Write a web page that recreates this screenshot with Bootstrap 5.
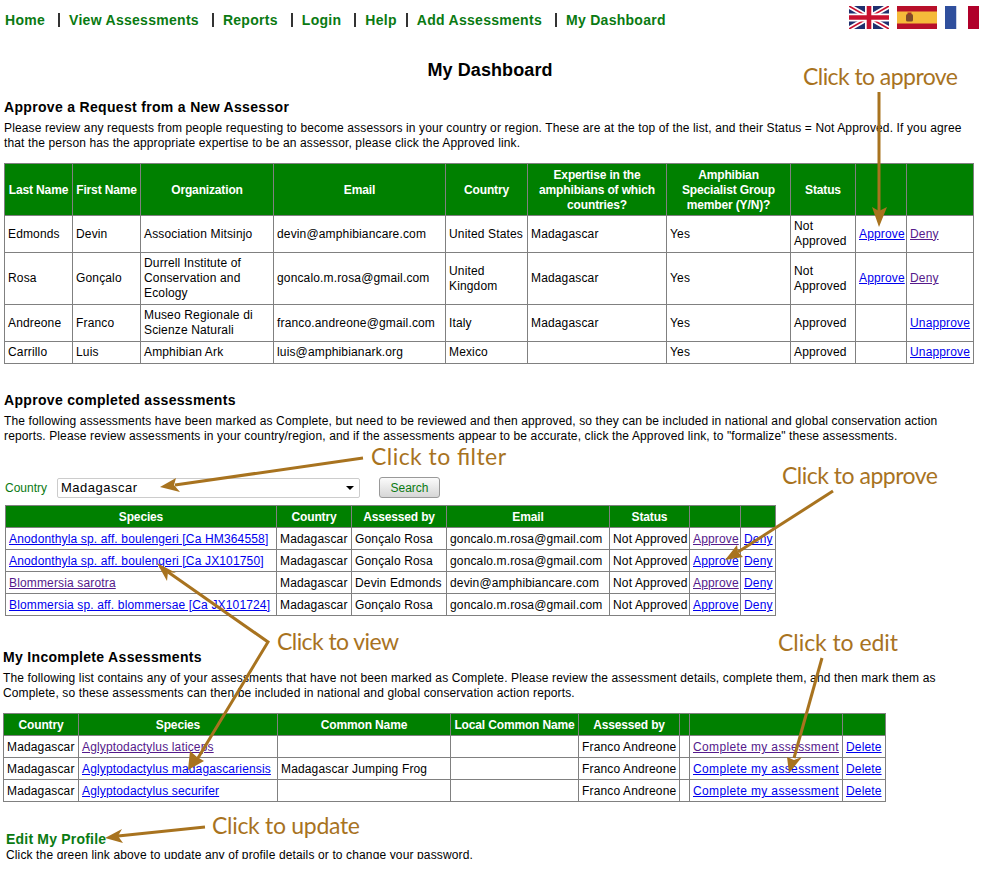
<!DOCTYPE html>
<html lang="en">
<head>
    <meta charset="UTF-8">
    <meta name="viewport" content="width=device-width, initial-scale=1.0">
    <title>My Dashboard</title>
    <link href="https://cdn.jsdelivr.net/npm/bootstrap@5.3.3/dist/css/bootstrap.min.css" rel="stylesheet">
    <script src="https://cdn.jsdelivr.net/npm/bootstrap@5.3.3/dist/js/bootstrap.bundle.min.js"></script>
    <style>
        body { font-family: "Liberation Sans", Arial, sans-serif; font-size: 12px; line-height: 15px; color: #000; background: #fff; }
        .page-clip { position: relative; height: 859px; overflow: hidden; }
        a { color: #0000ee; }
        a.seen { color: #551a8b; }

        .top-bar { height: 40px; padding: 0 4px 0 5px; }
        .top-link { font-size: 14px; font-weight: 700; line-height: 16px; color: #0a7a12; text-decoration: none; letter-spacing: .285px; }
        .top-sep { width: 2px; height: 14px; background: #333; margin: 0 9px 0 13px; }
        .top-sep.tight { margin-left: 9px; }
        .flags { position: absolute; top: 6px; left: 849px; gap: 8px; }

        .page-title { font-size: 18px; font-weight: 700; line-height: 22px; text-align: center; letter-spacing: .1px; margin: 19px 0 0; padding-right: 3px; }
        .sect-head { font-size: 14px; font-weight: 700; line-height: 16px; letter-spacing: .32px; margin: 0 0 6px 4px; }
        .sect-text { letter-spacing: .13px; margin: 0 8px 12px 4px; }
        .head-a { margin-top: 18px; }
        .head-b { margin-top: 28px; }
        .head-c { margin-top: 33px; margin-left: 3px; }
        .text-c { margin-left: 3px; }

        .grid-tbl { table-layout: fixed; border-collapse: collapse; margin-bottom: 0; }
        .grid-tbl > :not(caption) > * > * { padding: 3px; border: 1px solid #808080; font-size: 12px; line-height: 15px; letter-spacing: .15px; color: #000; background: #fff; box-shadow: none; vertical-align: middle; }
        .grid-tbl > thead > tr > th { padding: 4px 3px 2px; background: #008000; color: #fff; font-weight: 700; text-align: center; letter-spacing: -.15px; }
        .grid-b > tbody > tr > td, .grid-c > tbody > tr > td { padding: 4px 3px 2px; white-space: nowrap; }
        .grid-c > tbody > tr > td:nth-child(7) a { letter-spacing: .36px; }
        .grid-a { width: 969px; margin-left: 4px; }
        .grid-b { width: 770px; margin-left: 5px; }
        .grid-c { width: 882px; margin-left: 3px; }

        .filter-row { height: 21px; margin: 33px 0 7px 5px; }
        .filter-label { width: 52px; padding-top: 1px; color: #0a7a12; }
        .filter-select { width: 303px; height: 20px; padding: 0 0 0 3px; font-size: 13px; line-height: 18px; font-family: "Liberation Sans", Arial, sans-serif; letter-spacing: .5px; color: #000; border: 1px solid #ccc; border-radius: 2px; background-image: url("data:image/svg+xml,%3csvg xmlns='http://www.w3.org/2000/svg' viewBox='0 0 8 4'%3e%3cpath d='M0 0h8L4 4z'/%3e%3c/svg%3e"); background-position: right 5px center; background-size: 8px 4px; }
        .search-btn { width: 61px; height: 21px; margin-left: 19px; padding: 1px 0 0; font-size: 12px; line-height: 15px; color: #0a7a12; border: 1px solid #999; border-radius: 3px; background: linear-gradient(#fbfbfb, #d6d6d6); }

        .profile-link { display: block; font-size: 14px; font-weight: 700; line-height: 16px; letter-spacing: .2px; color: #0a7a12; text-decoration: none; margin: 29px 0 1px 6px; }
        .profile-text { letter-spacing: .13px; margin: 0 0 0 6px; }

        .notes { position: absolute; left: 0; top: 0; pointer-events: none; }
        .notes text { font-family: Lato, "DejaVu Sans", sans-serif; font-size: 23px; fill: #a8731f; }
        .notes line, .notes polyline { stroke: #a8731f; stroke-width: 3; fill: none; }
        .notes polygon { fill: #a8731f; }
    </style>
</head>
<body>
<div class="page-clip">
    <nav class="top-bar d-flex align-items-center">
        <a class="top-link" href="#">Home</a><span class="top-sep"></span>
        <a class="top-link" href="#">View Assessments</a><span class="top-sep"></span>
        <a class="top-link" href="#">Reports</a><span class="top-sep"></span>
        <a class="top-link" href="#">Login</a><span class="top-sep"></span>
        <a class="top-link" href="#">Help</a><span class="top-sep tight"></span>
        <a class="top-link" href="#">Add Assessments</a><span class="top-sep"></span>
        <a class="top-link" href="#">My Dashboard</a>
    </nav>
    <div class="flags d-flex">
        <svg width="40" height="23" viewBox="0 0 40 23">
            <rect width="40" height="23" fill="#1f2f6e"/>
            <path d="M0 0L40 23M40 0L0 23" stroke="#fff" stroke-width="5"/>
            <path d="M0 0L40 23M40 0L0 23" stroke="#c8102e" stroke-width="1.6"/>
            <path d="M20 0V23M0 11.5H40" stroke="#fff" stroke-width="8"/>
            <path d="M20 0V23M0 11.5H40" stroke="#c8102e" stroke-width="4.6"/>
        </svg>
        <svg width="40" height="23" viewBox="0 0 40 23">
            <rect width="40" height="23" fill="#b8102a"/>
            <rect y="5.5" width="40" height="12" fill="#f5bb3a"/>
            <rect x="9" y="8" width="7" height="7.5" rx="1.5" fill="#7d4a2a"/>
            <rect x="10.5" y="6.5" width="4" height="2" fill="#a8322a"/>
        </svg>
        <svg width="34" height="23" viewBox="0 0 34 23">
            <rect width="11.5" height="23" fill="#2f4f9d"/>
            <rect x="11.5" width="11.5" height="23" fill="#fff"/>
            <rect x="23" width="11" height="23" fill="#b0002a"/>
        </svg>
    </div>

    <h1 class="page-title">My Dashboard</h1>

    <h2 class="sect-head head-a">Approve a Request from a New Assessor</h2>
    <p class="sect-text">Please review any requests from people requesting to become assessors in your country or region. These are at the top of the list, and their Status = Not Approved. If you agree that the person has the appropriate expertise to be an assessor, please click the Approved link.</p>
    <table class="table grid-tbl grid-a">
        <colgroup><col width="68"><col width="68"><col width="133"><col width="172"><col width="82"><col width="139"><col width="124"><col width="65"><col width="51"><col width="67"></colgroup>
        <thead>
            <tr><th class="text-nowrap">Last Name</th><th class="text-nowrap">First Name</th><th>Organization</th><th>Email</th><th>Country</th><th>Expertise in the amphibians of which countries?</th><th>Amphibian Specialist Group member (Y/N)?</th><th>Status</th><th></th><th></th></tr>
        </thead>
        <tbody>
            <tr><td>Edmonds</td><td>Devin</td><td>Association Mitsinjo</td><td>devin@amphibiancare.com</td><td>United States</td><td>Madagascar</td><td>Yes</td><td>Not Approved</td><td><a href="#">Approve</a></td><td><a class="seen" href="#">Deny</a></td></tr>
            <tr><td>Rosa</td><td>Gonçalo</td><td>Durrell Institute of Conservation and Ecology</td><td>goncalo.m.rosa@gmail.com</td><td>United Kingdom</td><td>Madagascar</td><td>Yes</td><td>Not Approved</td><td><a href="#">Approve</a></td><td><a class="seen" href="#">Deny</a></td></tr>
            <tr><td>Andreone</td><td>Franco</td><td>Museo Regionale di Scienze Naturali</td><td>franco.andreone@gmail.com</td><td>Italy</td><td>Madagascar</td><td>Yes</td><td>Approved</td><td></td><td><a href="#">Unapprove</a></td></tr>
            <tr><td>Carrillo</td><td>Luis</td><td>Amphibian Ark</td><td>luis@amphibianark.org</td><td>Mexico</td><td></td><td>Yes</td><td>Approved</td><td></td><td><a href="#">Unapprove</a></td></tr>
        </tbody>
    </table>

    <h2 class="sect-head head-b">Approve completed assessments</h2>
    <p class="sect-text mb-0">The following assessments have been marked as Complete, but need to be reviewed and then approved, so they can be included in national and global conservation action reports. Please review assessments in your country/region, and if the assessments appear to be accurate, click the Approved link, to "formalize" these assessments.</p>
    <div class="filter-row d-flex align-items-center">
        <label class="filter-label" for="countrySel">Country</label>
        <select class="form-select filter-select" id="countrySel"><option>Madagascar</option></select>
        <button type="button" class="btn search-btn">Search</button>
    </div>
    <table class="table grid-tbl grid-b">
        <colgroup><col width="271"><col width="75"><col width="95"><col width="163"><col width="80"><col width="51"><col width="35"></colgroup>
        <thead>
            <tr><th>Species</th><th>Country</th><th>Assessed by</th><th>Email</th><th>Status</th><th></th><th></th></tr>
        </thead>
        <tbody>
            <tr><td><a href="#">Anodonthyla sp. aff. boulengeri [Ca HM364558]</a></td><td>Madagascar</td><td>Gonçalo Rosa</td><td>goncalo.m.rosa@gmail.com</td><td>Not Approved</td><td><a class="seen" href="#">Approve</a></td><td><a href="#">Deny</a></td></tr>
            <tr><td><a href="#">Anodonthyla sp. aff. boulengeri [Ca JX101750]</a></td><td>Madagascar</td><td>Gonçalo Rosa</td><td>goncalo.m.rosa@gmail.com</td><td>Not Approved</td><td><a href="#">Approve</a></td><td><a href="#">Deny</a></td></tr>
            <tr><td><a class="seen" href="#">Blommersia sarotra</a></td><td>Madagascar</td><td>Devin Edmonds</td><td>devin@amphibiancare.com</td><td>Not Approved</td><td><a class="seen" href="#">Approve</a></td><td><a href="#">Deny</a></td></tr>
            <tr><td><a href="#">Blommersia sp. aff. blommersae [Ca JX101724]</a></td><td>Madagascar</td><td>Gonçalo Rosa</td><td>goncalo.m.rosa@gmail.com</td><td>Not Approved</td><td><a href="#">Approve</a></td><td><a href="#">Deny</a></td></tr>
        </tbody>
    </table>

    <h2 class="sect-head head-c">My Incomplete Assessments</h2>
    <p class="sect-text text-c">The following list contains any of your assessments that have not been marked as Complete. Please review the assessment details, complete them, and then mark them as Complete, so these assessments can then be included in national and global conservation action reports.</p>
    <table class="table grid-tbl grid-c">
        <colgroup><col width="75"><col width="199"><col width="173"><col width="128"><col width="101"><col width="10"><col width="153"><col width="43"></colgroup>
        <thead>
            <tr><th>Country</th><th>Species</th><th>Common Name</th><th class="text-nowrap">Local Common Name</th><th>Assessed by</th><th></th><th></th><th></th></tr>
        </thead>
        <tbody>
            <tr><td>Madagascar</td><td><a class="seen" href="#">Aglyptodactylus laticeps</a></td><td></td><td></td><td>Franco Andreone</td><td></td><td><a class="seen" href="#">Complete my assessment</a></td><td><a href="#">Delete</a></td></tr>
            <tr><td>Madagascar</td><td><a href="#">Aglyptodactylus madagascariensis</a></td><td>Madagascar Jumping Frog</td><td></td><td>Franco Andreone</td><td></td><td><a href="#">Complete my assessment</a></td><td><a href="#">Delete</a></td></tr>
            <tr><td>Madagascar</td><td><a href="#">Aglyptodactylus securifer</a></td><td></td><td></td><td>Franco Andreone</td><td></td><td><a href="#">Complete my assessment</a></td><td><a href="#">Delete</a></td></tr>
        </tbody>
    </table>

    <a class="profile-link" href="#">Edit My Profile</a>
    <p class="profile-text">Click the green link above to update any of profile details or to change your password.</p>

    <!-- callouts drawn over the page -->
    <svg class="notes" width="983" height="859" viewBox="0 0 983 859">
        <text x="803" y="85" textLength="155">Click to approve</text>
        <line x1="879" y1="92" x2="879" y2="212"/>
        <polygon points="879,227 872,207 879,211 887,207"/>

        <text x="371" y="465" textLength="135">Click to filter</text>
        <line x1="363" y1="458" x2="175" y2="485"/>
        <polygon points="160,487 176,478 174,485 180,492"/>

        <text x="782" y="484" textLength="156">Click to approve</text>
        <line x1="833" y1="491" x2="738" y2="552"/>
        <polygon points="725,560 737,545 738,552 743,557"/>

        <text x="277" y="650" textLength="122">Click to view</text>
        <polyline points="168,572 268,642 198,758"/>
        <polygon points="157,563 176,573 168,572 167,581"/>
        <polygon points="188,770 190,751 197,757 204,761"/>

        <text x="778" y="651" textLength="120">Click to edit</text>
        <line x1="822" y1="658" x2="794" y2="758"/>
        <polygon points="789,773 787,757 794,760 802,757"/>

        <text x="212" y="834" textLength="148">Click to update</text>
        <line x1="205" y1="827" x2="118" y2="836"/>
        <polygon points="105,838 122,829 118,836 123,843"/>
    </svg>
</div>
</body>
</html>
